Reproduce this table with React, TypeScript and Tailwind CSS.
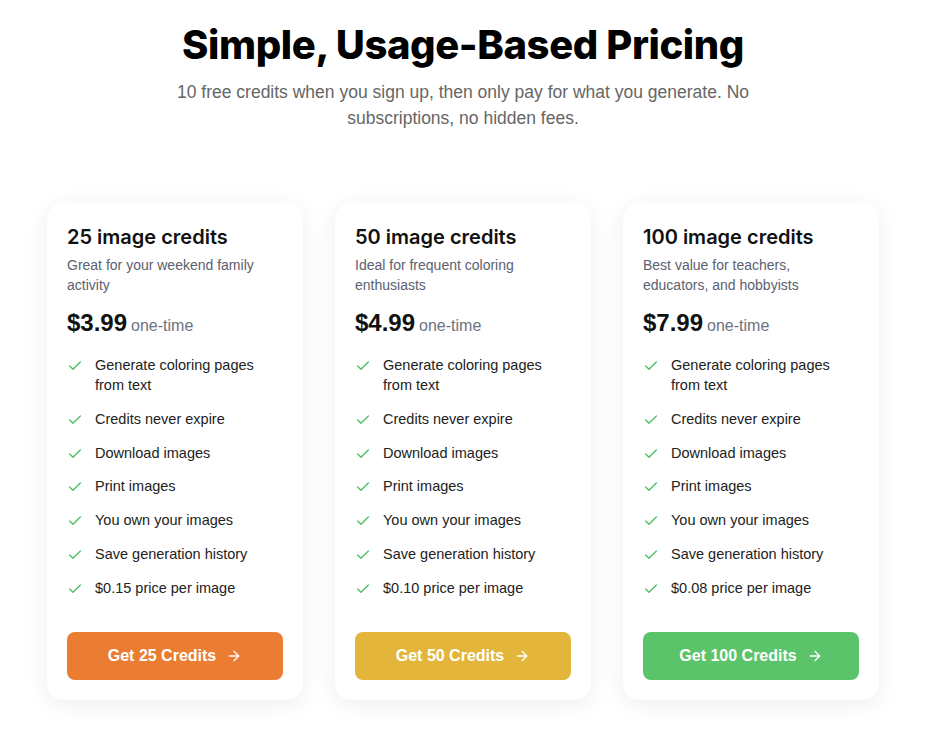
import { Check, ArrowRight } from 'lucide-react';

type Plan = {
  credits: number;
  blurb: string;
  price: string;
  perImage: string;
  button: string;
};

const plans: Plan[] = [
  {
    credits: 25,
    blurb: 'Great for your weekend family activity',
    price: '$3.99',
    perImage: '$0.15',
    button: 'bg-[#ea7d32]',
  },
  {
    credits: 50,
    blurb: 'Ideal for frequent coloring enthusiasts',
    price: '$4.99',
    perImage: '$0.10',
    button: 'bg-[#e3b53b]',
  },
  {
    credits: 100,
    blurb: 'Best value for teachers, educators, and hobbyists',
    price: '$7.99',
    perImage: '$0.08',
    button: 'bg-[#5bc46a]',
  },
];

const PlanCard = ({ plan }: { plan: Plan }) => {
  const features = [
    'Generate coloring pages from text',
    'Credits never expire',
    'Download images',
    'Print images',
    'You own your images',
    'Save generation history',
    `${plan.perImage} price per image`,
  ];

  return (
    <div className="flex w-[256px] flex-col rounded-2xl bg-white p-5 shadow-[0_4px_24px_rgba(0,0,0,0.07)]">
      <h3 className="font-['Inter',sans-serif] text-[20px] leading-[28px] font-semibold text-[#111]">
        {plan.credits} image credits
      </h3>
      <p className="mt-[4px] text-[14px] leading-[20px] text-[#5b6170]">{plan.blurb}</p>
      <div className="mt-[12px] flex items-baseline gap-1">
        <span className="text-[24px] leading-[32px] font-bold text-[#111]">{plan.price}</span>
        <span className="text-[16px] text-[#6b7280]">one-time</span>
      </div>
      <ul className="mt-[16px] flex flex-col gap-[13.8px]">
        {features.map((f) => (
          <li key={f} className="flex items-start gap-[12px] text-[14.5px] leading-[20px] text-[#222]">
            <Check className="mt-[3px] h-4 w-4 shrink-0 text-[#4cc05e]" strokeWidth={2} />
            <span>{f}</span>
          </li>
        ))}
      </ul>
      <button
        type="button"
        className={`mt-[34px] flex h-[48px] w-full items-center justify-center gap-[10px] rounded-lg text-[16px] font-bold text-white ${plan.button}`}
      >
        Get {plan.credits} Credits
        <ArrowRight className="h-4 w-4" strokeWidth={2} />
      </button>
    </div>
  );
};

const App = () => {
  return (
    <div className="min-h-screen bg-white pr-[7px] font-['Liberation_Sans',Arial,sans-serif]">
      <header className="flex flex-col items-center pt-[23px] text-center">
        <h1 className="font-['Inter',sans-serif] text-[40px] leading-[44px] font-extrabold tracking-[-0.01em] text-black">
          Simple, Usage-Based Pricing
        </h1>
        <p className="mt-[12px] max-w-[600px] text-[17.5px] leading-[26px] text-[#666]">
          10 free credits when you sign up, then only pay for what you generate. No subscriptions, no hidden fees.
        </p>
      </header>
      <div className="mt-[72px] flex justify-center gap-[32px] pb-10">
        {plans.map((p) => (
          <PlanCard key={p.credits} plan={p} />
        ))}
      </div>
    </div>
  );
};

export default App;
